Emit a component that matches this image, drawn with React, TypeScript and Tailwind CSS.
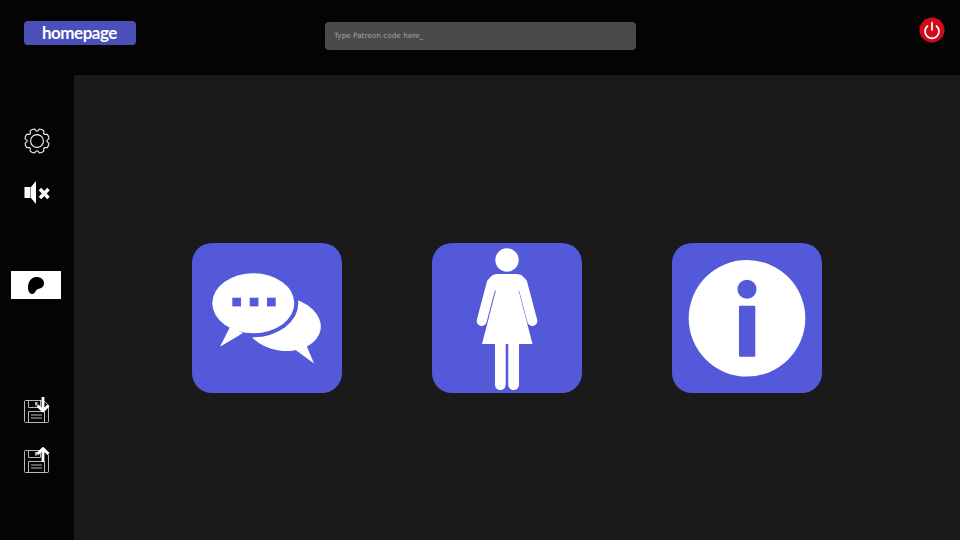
const TILE = "#5359d9";

// 8 teeth, built once so the outline stays symmetrical
function gearPath() {
  const points: string[] = [];
  for (let i = 0; i < 8; i++) {
    const a = (i * Math.PI) / 4 - Math.PI / 8;
    const at = (r: number, d: number) =>
      `${(13 + r * Math.cos(a + d)).toFixed(2)} ${(13 + r * Math.sin(a + d)).toFixed(2)}`;
    points.push(
      `${i === 0 ? "M" : "L"}${at(10, -0.33)}`,
      `L${at(12.2, -0.2)}`,
      `Q${at(12.9, 0)} ${at(12.2, 0.2)}`,
      `L${at(10, 0.33)}`,
    );
  }
  return points.join(" ") + " Z";
}

function GearIcon() {
  return (
    <svg viewBox="0 0 26 26" className="w-[26px] h-[26px]" fill="none" stroke="#f2f2f2" strokeWidth="1.1">
      <path d={gearPath()} strokeLinejoin="round" />
      <circle cx="13" cy="13" r="6.4" />
    </svg>
  );
}

function ChatIcon() {
  return (
    <svg viewBox="0 0 150 150" className="w-full h-full">
      <ellipse cx="91" cy="81" rx="38" ry="26.7" fill="#fff" transform="rotate(8 91 81)" />
      <path d="M101 105 L122 120.5 L113 99 Z" fill="#fff" />
      <ellipse cx="61.3" cy="60.3" rx="45" ry="34" fill={TILE} />
      <ellipse cx="61.3" cy="60.3" rx="41" ry="30" fill="#fff" />
      <path d="M38 84 L28 103.7 L51 90 Z" fill="#fff" />
      <rect x="40.3" y="54.7" width="8.7" height="8.7" fill={TILE} />
      <rect x="57.7" y="54.7" width="8.7" height="8.7" fill={TILE} />
      <rect x="75" y="54.7" width="8.7" height="8.7" fill={TILE} />
    </svg>
  );
}

function WomanIcon() {
  return (
    <svg viewBox="0 0 150 150" className="w-full h-full">
      <circle cx="75" cy="17" r="11.7" fill="#fff" />
      <path d="M66 31 C60 31 57 34 55 41 L64 48 H86 L95 41 C93 34 90 31 84 31 Z" fill="#fff" />
      <path d="M59.7 40 L49.7 78 M90.3 40 L100.3 78" stroke="#fff" strokeWidth="10" strokeLinecap="round" />
      <path d="M64.5 45 L50 101 H100.5 L86 45 Z" fill="#fff" />
      <rect x="63" y="95" width="10.7" height="52" rx="5.3" fill="#fff" />
      <rect x="76.3" y="95" width="10.7" height="52" rx="5.3" fill="#fff" />
    </svg>
  );
}

function InfoIcon() {
  return (
    <svg viewBox="0 0 150 150" className="w-full h-full">
      <circle cx="75" cy="75.3" r="58.3" fill="#fff" />
      <circle cx="75" cy="46.3" r="9.5" fill={TILE} />
      <rect x="67" y="62.7" width="16.3" height="51" rx="1" fill={TILE} />
    </svg>
  );
}

function MuteIcon() {
  return (
    <svg viewBox="0 0 26 24" className="w-[26px] h-6" fill="#fff">
      <rect x="0.5" y="6" width="6" height="11" />
      <path d="M7 6 L12 0 V23 L7 17 Z" />
      <path d="M16 8 L24.5 17 M24.5 8 L16 17" stroke="#fff" strokeWidth="3.4" />
    </svg>
  );
}

function PowerIcon() {
  return (
    <svg viewBox="0 0 26 26" className="w-[26px] h-[26px]">
      <circle cx="13" cy="13" r="12.5" fill="#d20a1c" />
      <path d="M8.5 9 A7 7 0 1 0 17.5 9" fill="none" stroke="#fff" strokeWidth="1.7" strokeLinecap="round" />
      <path d="M13 5.5 V13" stroke="#fff" strokeWidth="1.7" strokeLinecap="round" />
    </svg>
  );
}

function FloppyIcon({ up }: { up?: boolean }) {
  return (
    <svg viewBox="0 0 26 27" className="w-[26px] h-[27px]" fill="none" strokeLinejoin="round">
      <path d="M1.5 3.5 H19 L24.5 8 V24.5 Q24.5 25.5 23.5 25.5 H1.5 Q0.5 25.5 0.5 24.5 V4.5 Q0.5 3.5 1.5 3.5 Z" stroke="#b8b8b8" strokeWidth="1" />
      <path d="M4.5 3.5 V10.5 H16.5 V3.5" stroke="#b8b8b8" strokeWidth="1" />
      <rect x="11" y="5" width="2.5" height="3.5" fill="#b8b8b8" />
      <path d="M4.5 25.5 V14.5 H20.5 V25.5" stroke="#b8b8b8" strokeWidth="1" />
      <path d="M7 18 H18 M7 21 H18" stroke="#b8b8b8" strokeWidth="1" />
      {up ? (
        <path d="M19 15 V2 M13.5 7 L19 1.5 L24.5 7" stroke="#fff" strokeWidth="2.8" />
      ) : (
        <path d="M19 0 V13 M13.5 8.5 L19 14 L24.5 8.5" stroke="#fff" strokeWidth="2.8" />
      )}
    </svg>
  );
}

export default function App() {
  return (
    <div className="w-[960px] h-[540px] overflow-hidden bg-[#040404] flex flex-col font-['Liberation_Sans',sans-serif]">
      <header className="h-[75px] shrink-0 flex items-start">
        <button className="ml-6 mt-[21px] w-28 h-6 rounded bg-[#4b4fb8] text-white text-[17px] leading-6 font-bold tracking-[-0.5px] text-left pl-[18px] font-['Lato',sans-serif]">
          homepage
        </button>
        <div className="ml-[189px] mt-[22px] w-[311px] h-7 rounded bg-[#4a4a4a] pl-[9px] text-[7.3px] leading-7 text-[#a3a3a3] font-['DejaVu_Sans',sans-serif]">
          Type Patreon code here_
        </div>
        <div className="ml-auto mr-[15px] mt-[17px]">
          <PowerIcon />
        </div>
      </header>
      <div className="flex-1 flex min-h-0">
        <aside className="w-[74px] shrink-0 flex flex-col items-center">
          <div className="mt-[53px]">
            <GearIcon />
          </div>
          <div className="mt-[27px]">
            <MuteIcon />
          </div>
          <div className="mt-[66px] self-start ml-[11px] w-[50px] h-7 bg-white flex items-center justify-center">
            <svg viewBox="0 0 16 17" className="w-4 h-[17px]" fill="#000">
              <path d="M8.5 0 C13 0 16 2.5 16 6.5 C16 10 12.5 11.5 10 12 C7.5 12.6 7.5 17 4 17 C1 17 0 13 0 10.5 C0 4.5 3.5 0 8.5 0 Z" />
            </svg>
          </div>
          <div className="mt-[98px]">
            <FloppyIcon />
          </div>
          <div className="mt-[23px]">
            <FloppyIcon up />
          </div>
        </aside>
        <main className="flex-1 bg-[#1a1a1a] flex items-start gap-[90px] pl-[118px] pt-[168px]">
          <div className="w-[150px] h-[150px] rounded-[20px] bg-[#5359d9]">
            <ChatIcon />
          </div>
          <div className="w-[150px] h-[150px] rounded-[20px] bg-[#5359d9]">
            <WomanIcon />
          </div>
          <div className="w-[150px] h-[150px] rounded-[20px] bg-[#5359d9]">
            <InfoIcon />
          </div>
        </main>
      </div>
    </div>
  );
}
